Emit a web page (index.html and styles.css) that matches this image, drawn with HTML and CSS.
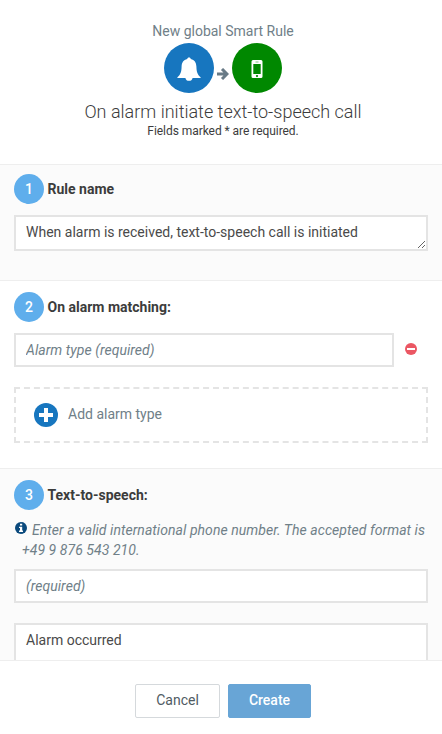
FILE: index.html
```
<!DOCTYPE html>
<html lang="en">
<head>
<meta charset="utf-8">
<title>New global Smart Rule</title>
<link rel="stylesheet" href="styles.css">
</head>
<body>
<form class="dialog">
  <header class="header">
    <p class="subtitle">New global Smart Rule</p>
    <div class="flow">
      <span class="disc disc-alarm"><svg width="24" height="26" viewBox="0 0 24 26"><path d="M12 .4c1.100 0 1.700.6 1.800 1.500 3.700.8 5.500 3.600 5.600 7.600.1 5 1 8.300 4.200 10.700V21H15.600a3.700 3.700 0 0 1-7.200 0H.4v-.8c3.200-2.400 4.100-5.700 4.200-10.700.1-4 1.900-6.800 5.600-7.600C10.300 1 10.900.4 12 .4z" fill="#fff"/></svg></span>
      <svg class="arrow" width="12" height="12" viewBox="0 0 12 12"><path d="M0 6h10M5 1l5 5-5 5" fill="none" stroke="#687a86" stroke-width="3"/></svg>
      <span class="disc disc-phone"><svg width="12" height="18" viewBox="0 0 12 18"><path fill-rule="evenodd" d="M2 0h8q1.500 0 1.500 1.500v15q0 1.500-1.500 1.500H2Q.5 18 .5 16.500v-15Q.5 0 2 0zM2.300 4v10h7.400V4zM4.500 1.700v.6h3v-.6zM6 15a1 1 0 1 0 .01 0z" fill="#fff"/></svg></span>
    </div>
    <h1 class="title">On alarm initiate text-to-speech call</h1>
    <p class="note">Fields marked * are required.</p>
  </header>
  <main class="body">
    <section class="step step-name">
      <h2 class="step-head"><span class="num">1</span>Rule name</h2>
      <textarea class="field area" rows="1">When alarm is received, text-to-speech call is initiated</textarea>
    </section>
    <section class="step step-alarm">
      <h2 class="step-head"><span class="num">2</span>On alarm matching:</h2>
      <div class="row">
        <input class="field" placeholder="Alarm type (required)">
        <svg class="remove" width="12" height="12" viewBox="0 0 12 12"><circle cx="6" cy="6" r="6" fill="#eb5763"/><path d="M2 5h8v2H2z" fill="#fff"/></svg>
      </div>
      <div class="add">
        <svg width="24" height="24" viewBox="0 0 24 24"><circle cx="12" cy="12" r="12" fill="#1776bf"/><path d="M12 5v14M5 12h14" stroke="#fff" stroke-width="4"/></svg>
        <span class="add-label">Add alarm type</span>
      </div>
    </section>
    <section class="step step-speech">
      <h2 class="step-head"><span class="num">3</span>Text-to-speech:</h2>
      <p class="hint"><svg class="info" width="12" height="12" viewBox="0 0 12 12"><circle cx="6" cy="6" r="6" fill="#0b4a7d"/><path d="M5 1.700h2.200v1.800H5zM4 4.700h3.200v3.900H8v1.400H4V8.600h1V6H4z" fill="#fff"/></svg>Enter a valid international phone number. The accepted format is +49 9 876 543 210.</p>
      <input class="field" placeholder="(required)">
      <textarea class="field message">Alarm occurred</textarea>
    </section>
  </main>
  <footer class="footer">
    <button class="btn" type="button">Cancel</button>
    <button class="btn btn-primary" type="button">Create</button>
  </footer>
</form>
</body>
</html>
```
FILE: styles.css
```
* { box-sizing: border-box; }
body {
  margin: 0;
  background: #fff;
  color: #3c3c3c;
  font: 14px/20px Roboto, sans-serif;
}
p, h1, h2 { margin: 0; }
svg { display: block; flex: none; }

.dialog {
  height: 734px;
  display: flex;
  flex-direction: column;
  overflow: hidden;
}
.header {
  height: 164px;
  flex: none;
  padding-top: 21px;
  text-align: center;
}
.subtitle { color: #708088; padding-left: 4px; }
.flow {
  display: flex;
  justify-content: center;
  align-items: center;
  margin-top: 2px;
  padding-left: 4px;
}
.disc {
  width: 50px;
  height: 50px;
  border-radius: 50%;
  display: flex;
  align-items: center;
  justify-content: center;
}
.disc-alarm { background: #1776bf; }
.disc-alarm svg { margin-top: 3px; }
.disc-phone { background: #080; }
.disc-phone svg { margin-top: 2px; }
.arrow { margin: 11px 3px 0; }
.title {
  margin-top: 8px;
  padding-left: 4px;
  font-size: 18px;
  font-weight: 300;
  line-height: 22px;
}
.note {
  padding-left: 4px;
  font-size: 12px;
  line-height: 16px;
  letter-spacing: -0.05px;
}

.body { flex: 1; min-height: 0; overflow: hidden; }
.step { border-top: 1px solid #eee; padding: 0 14px; }
.step-name { height: 116px; padding-top: 9px; background: #fbfbfb; }
.step-alarm { height: 188px; padding-top: 11px; }
.step-speech { height: 260px; padding-top: 11px; background: #fbfbfb; }
.step-head {
  display: flex;
  align-items: center;
  gap: 3.500px;
  margin-bottom: 11px;
  font-size: 14px;
  font-weight: 700;
}
.num {
  width: 30px;
  height: 30px;
  border-radius: 50%;
  background: #5faeec;
  color: #fff;
  font-weight: 500;
  line-height: 30px;
  text-align: center;
}
.field {
  display: block;
  width: 100%;
  height: 34px;
  padding: 5px 10px;
  border: 2px solid #e4e4e4;
  border-radius: 0;
  background: #fff;
  color: #4a4a4a;
  font: inherit;
  outline: none;
}
.field::placeholder { color: #708088; font-style: italic; opacity: 1; letter-spacing: 0.05px; }
.area { height: 36px; resize: both; overflow: hidden; }
.row { display: flex; align-items: center; }
.row .field { width: 380px; }
.remove { margin: -2px 0 0 11px; }
.add {
  display: flex;
  align-items: center;
  gap: 10px;
  height: 56px;
  margin-top: 20px;
  padding: 0 18px;
  border: 2px dashed #e4e4e4;
  color: #708088;
}
.add-label { margin-top: -2px; }
.hint {
  margin-top: -1px;
  margin-bottom: 9px;
  padding-left: 8px;
  color: #708088;
  font-style: italic;
  letter-spacing: 0.055px;
}
.info { display: inline-block; margin: 0 5px 0 -7px; vertical-align: 1px; }
.message { height: 80px; margin-top: 20px; resize: none; }

.footer {
  height: 74px;
  flex: none;
  display: flex;
  justify-content: center;
  gap: 8px;
  padding: 23px 0 0 4px;
  border-top: 1px solid #eee;
}
.btn {
  width: 85px;
  height: 34px;
  padding: 0 0 2px;
  border: 1px solid #d5d9dc;
  border-radius: 2px;
  background: #fff;
  color: #505b63;
  font: inherit;
}
.btn-primary {
  width: 83px;
  border-color: #68a5d6;
  background: #68a5d6;
  color: #fff;
  font-weight: 500;
}
```
